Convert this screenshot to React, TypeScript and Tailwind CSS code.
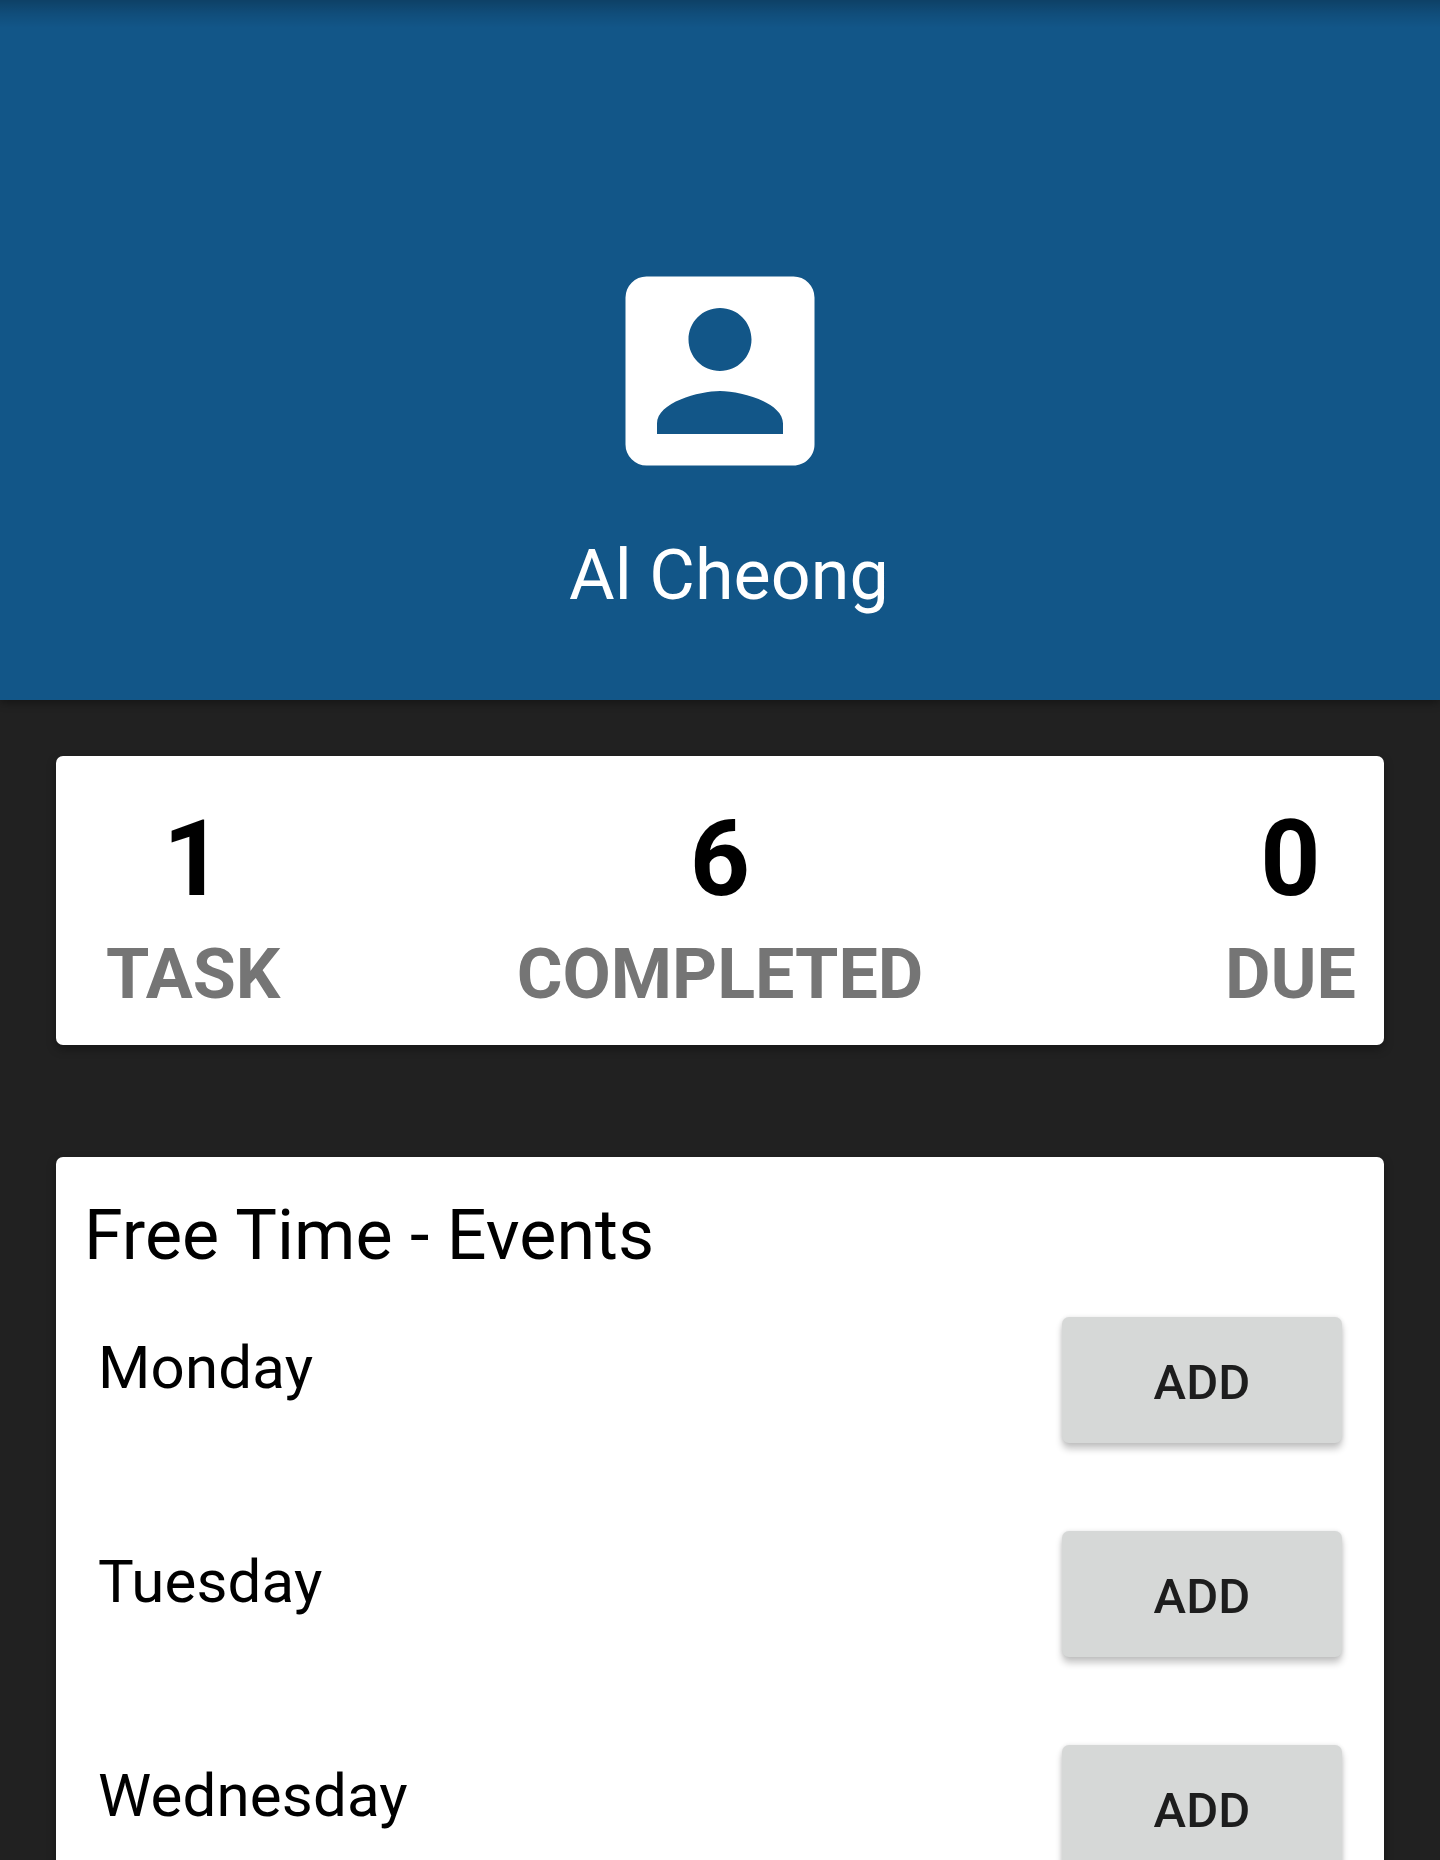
const stats = [
  { value: "1", label: "TASK", align: "justify-self-start pl-[50px]" },
  { value: "6", label: "COMPLETED", align: "justify-self-center" },
  { value: "0", label: "DUE", align: "justify-self-end pr-7" },
];

const days = ["Monday", "Tuesday", "Wednesday"];

function AccountBoxIcon() {
  return (
    <svg viewBox="0 0 24 24" className="size-[252px] shrink-0 fill-white" aria-hidden="true">
      <path d="M3 5v14a2 2 0 0 0 2 2h14c1.1 0 2-.9 2-2V5a2 2 0 0 0-2-2H5a2 2 0 0 0-2 2zm12 4c0 1.66-1.34 3-3 3s-3-1.34-3-3 1.34-3 3-3 3 1.34 3 3zm-9 8c0-2 4-3.1 6-3.1s6 1.1 6 3.1v1H6v-1z" />
    </svg>
  );
}

export default function App() {
  return (
    <div className="flex h-[1860px] w-[1440px] flex-col overflow-hidden bg-[#212121] font-['Roboto',sans-serif] text-black">
      <header className="flex h-[700px] shrink-0 flex-col items-center bg-[#125688] bg-linear-to-b from-black/25 via-black/10 via-[14px] to-transparent to-[28px] pt-[245px] text-white shadow-[0_3px_8px_rgba(0,0,0,0.35)]">
        <AccountBoxIcon />
        <h1 className="mt-[37px] pl-[18px] text-[70px] leading-[82px] tracking-[0.1px]">Al Cheong</h1>
      </header>

      <section className="mx-14 mt-14 grid h-[289px] shrink-0 grid-cols-[1fr_auto_1fr] rounded-[7px] bg-white pt-[42px] shadow-[0_4px_10px_rgba(0,0,0,0.35)]">
        {stats.map((s) => (
          <div key={s.label} className={`flex flex-col items-center font-bold ${s.align}`}>
            <span className="text-[105px] leading-[123px]">{s.value}</span>
            <span className="mt-3 text-[70px] leading-[82px] text-[#757575]">{s.label}</span>
          </div>
        ))}
      </section>

      <section className="mx-14 mt-28 h-[900px] shrink-0 rounded-[7px] bg-white pt-[37px] pr-[42px] pl-7 shadow-[0_4px_10px_rgba(0,0,0,0.35)]">
        <h2 className="text-[70px] leading-[82px] tracking-[0.03px]">Free Time - Events</h2>
        <ul className="mt-[41px] flex flex-col gap-[88px] pl-3.5">
          {days.map((day) => (
            <li key={day} className="flex h-[126px] items-start justify-between">
              <span className="pt-4 text-[60px] leading-[70px] tracking-[0.18px]">{day}</span>
              <button className="h-[126px] w-[280px] rounded-[7px] bg-[#d6d8d7] pt-1.5 text-[49px] leading-[58px] font-medium text-[#1d1d1d] tracking-[0.2px] shadow-[0_6px_7px_rgba(0,0,0,0.22),0_0_4px_rgba(0,0,0,0.1)]">
                ADD
              </button>
            </li>
          ))}
        </ul>
      </section>
    </div>
  );
}
